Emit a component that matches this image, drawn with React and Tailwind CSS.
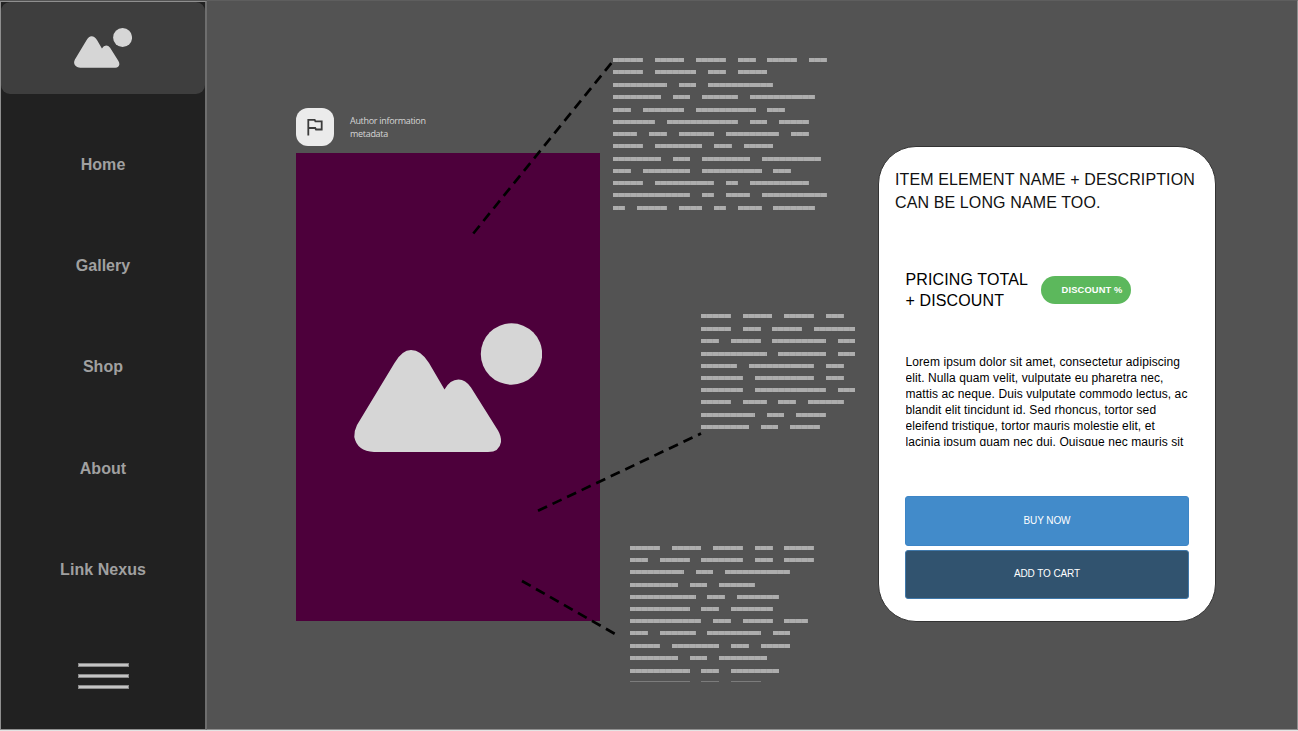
const NAV = ["Home", "Gallery", "Shop", "About", "Link Nexus"];

// Each row: [row height, ...word lengths in characters]
const NOTE_TOP = [
  [12, 5, 5, 5, 3, 5, 3],
  [13, 5, 7, 3, 5],
  [12, 9, 3, 11],
  [13, 8, 3, 6, 11],
  [12, 3, 7, 10, 3],
  [12, 7, 12, 3, 5],
  [12, 4, 3, 6, 9, 3],
  [13, 5, 8, 3, 5],
  [12, 8, 3, 8, 10],
  [12, 3, 8, 10, 3],
  [12, 5, 10, 2, 10],
  [13, 13, 2, 4, 11],
  [4, 2, 5, 4, 2, 4, 7],
];

const NOTE_MIDDLE = [
  [13, 5, 5, 5, 3],
  [12, 5, 3, 5, 7],
  [13, 3, 5, 9, 3],
  [12, 11, 8, 3],
  [12, 6, 11, 3],
  [12, 7, 10, 3],
  [12, 7, 12, 3],
  [13, 5, 4, 3, 6],
  [12, 9, 3, 5],
  [4, 8, 3, 5],
];

const NOTE_BOTTOM = [
  [12, 5, 5, 5, 3, 5],
  [12, 3, 5, 7, 3, 5],
  [13, 9, 3, 11],
  [12, 8, 3, 6],
  [12, 11, 3, 7],
  [12, 10, 3, 7],
  [12, 12, 3, 5, 4],
  [13, 3, 6, 9, 3],
  [12, 5, 8, 3, 5],
  [13, 8, 3, 8],
  [12, 10, 3, 8],
  [1, 10, 3, 5],
];

const CHAR = 5.93;

function Note({ rows, className }) {
  return (
    <div className={className}>
      {rows.map(([height, ...words], i) => (
        <div key={i} className="flex gap-[11.86px] overflow-hidden" style={{ height }}>
          {words.map((n, j) => (
            <span
              key={j}
              className={
                height === 1
                  ? "h-px shrink-0 bg-[#7c7c7c]"
                  : "h-1 shrink-0 bg-[repeating-linear-gradient(90deg,#adadad_0_5px,#a5a5a5_5px_5.93px)]"
              }
              style={{ width: n * CHAR }}
            />
          ))}
        </div>
      ))}
    </div>
  );
}

function Mountains({ className }) {
  return (
    <svg viewBox="0 0 188 130" preserveAspectRatio="none" className={className} fill="#d6d6d6">
      <circle cx="157.5" cy="31" r="30.7" />
      <path d="M3 102 L40.500 40 Q48 27 57 27 Q67 27 75 40 L90.500 66.500 Q96 56.500 104.500 56.500 Q111.500 56.500 117 64.500 L144 107.500 Q147.500 113.500 147 119 Q145.500 129 134 129 H20 Q3 128 .3 114 Q0 108 3 102 Z" />
    </svg>
  );
}

function Sidebar() {
  return (
    <aside className="mt-px flex w-[207px] shrink-0 flex-col border-b border-l border-t border-r-2 border-b-[#8f8f8f] border-l-[#8f8f8f] border-r-[#6e6e6e] border-t-[#8f8f8f] bg-[#212121]">
      <div className="flex h-[92px] shrink-0 items-start rounded-[9px] bg-[#3e3e3e] pl-[73px] pt-[26px]">
        <Mountains className="h-[40px] w-[58px]" />
      </div>
      <nav className="mt-[20px] flex flex-col">
        {NAV.map((item) => (
          <a
            key={item}
            className="flex h-[101.400px] items-center justify-center text-base font-bold tracking-[0.05px] text-[#a0a0a0]"
          >
            {item}
          </a>
        ))}
      </nav>
      <button aria-label="Menu" className="mx-auto mt-[42px] flex w-[51px] flex-col gap-[7px]">
        <span className="h-1 border border-[#8a8a8a] bg-[#c4c4c4]" />
        <span className="h-1 border border-[#8a8a8a] bg-[#c4c4c4]" />
        <span className="h-1 border border-[#8a8a8a] bg-[#c4c4c4]" />
      </button>
    </aside>
  );
}

function Artwork() {
  return (
    <section className="w-[304px] shrink-0 pt-[108px]">
      <header className="flex h-[45px] items-start">
        <div className="flex h-[38px] w-[38px] items-center justify-center rounded-[12px] bg-[#ebebeb]">
          <svg viewBox="0 0 18 18" className="size-[18px]" fill="none" stroke="#3c3c3c" strokeWidth="1.8">
            <path d="M2.300 17.500 V1.800 H8.700 L9.400 3.300 H15.700 V11.500 H10 L9.200 10 H2.300" />
          </svg>
        </div>
        <p className="ml-[16px] mt-[6px] w-[90px] font-['Open_Sans',sans-serif] text-[9px] leading-[13px] tracking-[-0.3px] text-[#d6d6d6]">
          Author information
          <br />
          metadata
        </p>
      </header>
      <div className="h-[468px] bg-[#4d003b] pl-[58px] pt-[170px]">
        <Mountains className="h-[130px] w-[188px]" />
      </div>
    </section>
  );
}

function ProductCard() {
  return (
    <section className="mt-[146px] flex h-[476px] w-[338px] shrink-0 flex-col rounded-[38px] border border-[#333] bg-white text-black">
      <h1 className="ml-[16px] mt-[21px] whitespace-nowrap text-base leading-[23px] tracking-[0.12px] text-[#111]">
        ITEM ELEMENT NAME + DESCRIPTION
        <br />
        CAN BE LONG NAME TOO.
      </h1>
      <div className="ml-[26.500px] mt-[55px] flex items-start">
        <p className="w-[135.500px] whitespace-nowrap text-base leading-[21px] tracking-[0.12px]">
          PRICING TOTAL
          <br />+ DISCOUNT
        </p>
        <span className="mt-[7px] flex h-[28px] w-[89.500px] items-center justify-end whitespace-nowrap rounded-full bg-[#5cb85c] pr-[8px] pt-[2px] text-[9.300px] font-bold tracking-[0.15px] text-white">
          DISCOUNT %
        </span>
      </div>
      <p className="ml-[26.500px] mt-[43px] h-[92px] overflow-hidden whitespace-nowrap text-[12px] leading-[16px] tracking-[0.09px]">
        Lorem ipsum dolor sit amet, consectetur adipiscing
        <br />
        elit. Nulla quam velit, vulputate eu pharetra nec,
        <br />
        mattis ac neque. Duis vulputate commodo lectus, ac
        <br />
        blandit elit tincidunt id. Sed rhoncus, tortor sed
        <br />
        eleifend tristique, tortor mauris molestie elit, et
        <br />
        lacinia ipsum quam nec dui. Quisque nec mauris sit
      </p>
      <div className="ml-[26px] mt-[50px] flex w-[284px] flex-col gap-[4px] text-[10px] tracking-[-0.1px] text-white">
        <button className="h-[50px] rounded-[3px] border border-[#3d85c6] bg-[#428bca] pb-px">BUY NOW</button>
        <button className="h-[49px] rounded-[3px] border border-[#3f78aa] bg-[#31536f] pb-[2px]">ADD TO CART</button>
      </div>
    </section>
  );
}

export default function App() {
  return (
    <div className="h-[731px] w-[1298px] overflow-hidden bg-[#e4e4e4] font-['Liberation_Sans',Arial,sans-serif]">
      <div className="relative flex h-[730px] bg-[#535353]">
        <Sidebar />
        <main className="flex min-w-0 flex-1 border-b border-r border-t border-b-[#8f8f8f] border-r-[#8f8f8f] border-t-[#5e5e5e] pl-[89px]">
          <div className="-mt-px flex">
            <Artwork />
            <div className="w-[278px] shrink-0 pl-[13.300px] pt-[58px]">
              <Note rows={NOTE_TOP} />
              <Note rows={NOTE_MIDDLE} className="ml-[88px] mt-[104px]" />
              <Note rows={NOTE_BOTTOM} className="ml-[17px] mt-[117px]" />
            </div>
            <ProductCard />
          </div>
        </main>
        <svg
          className="pointer-events-none absolute left-0 top-0 h-[730px] w-[1298px]"
          fill="none"
          stroke="#000"
          strokeWidth="2.700"
          strokeDasharray="10 6.100"
        >
          <path d="M473.300 233.500 L613 61" />
          <path d="M538 510.800 L701 433.500" />
          <path d="M522 581 L616 634.500" />
        </svg>
      </div>
    </div>
  );
}
